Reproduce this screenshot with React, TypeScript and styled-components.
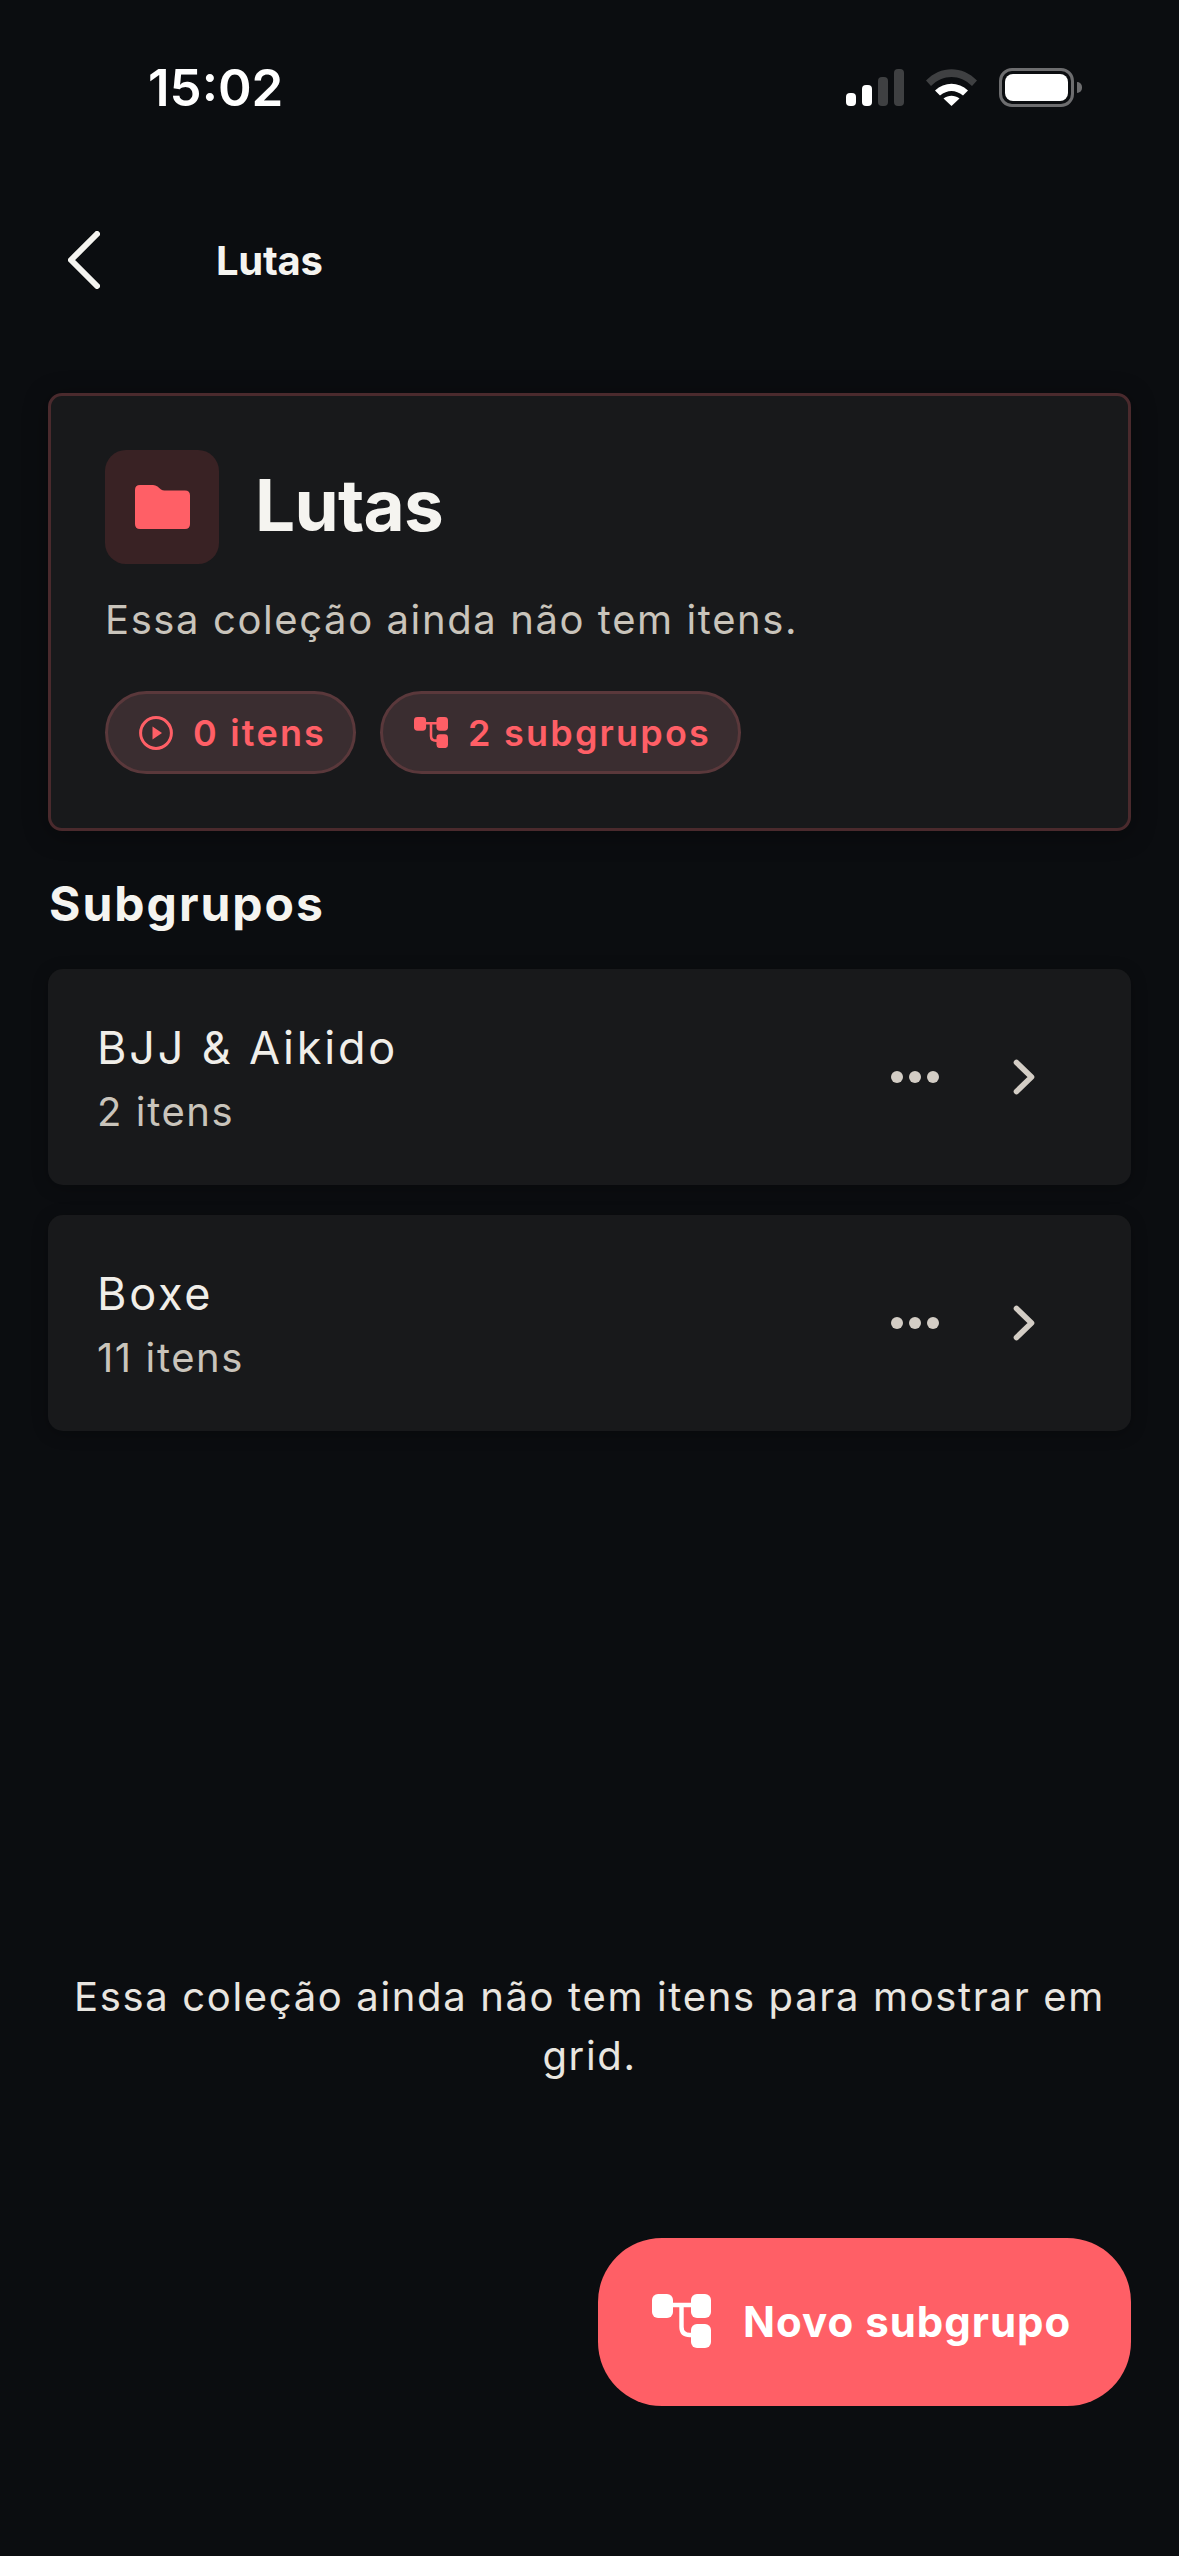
import React from 'react';
import styled, { createGlobalStyle } from 'styled-components';

const coral = '#ff5f66';
const muted = '#d3cdc5';

const GlobalStyle = createGlobalStyle`
  html, body {
    margin: 0;
    padding: 0;
    background: #0b0d10;
  }
  * {
    box-sizing: border-box;
  }
`;

const Page = styled.div`
  position: relative;
  width: 1179px;
  height: 2556px;
  overflow: hidden;
  background: #0b0d10;
  color: #f5f4f0;
  font-family: Inter, 'Liberation Sans', sans-serif;
`;

const StatusBar = styled.div`
  height: 176px;
  padding: 0 105px 2px 148px;
  display: flex;
  align-items: center;
  justify-content: space-between;
`;

const Clock = styled.span`
  font-size: 51px;
  font-weight: 600;
  color: #fff;
`;

const StatusIcons = styled.div`
  display: flex;
  align-items: center;
  gap: 22px;
`;

const Signal = styled.div`
  height: 37px;
  display: flex;
  align-items: flex-end;
  gap: 6px;
`;

const SignalBar = styled.span<{ $height: number; $on?: boolean }>`
  width: 10px;
  height: ${(p) => p.$height}px;
  border-radius: 4px;
  background: ${(p) => (p.$on ? '#fff' : '#3f4042')};
`;

const Battery = styled.div`
  position: relative;
  width: 75px;
  height: 39px;
  padding: 3px;
  border: 3px solid #6d6d6f;
  border-radius: 13px;
  &::after {
    content: '';
    position: absolute;
    right: -11px;
    top: 11px;
    width: 5px;
    height: 11px;
    border-radius: 0 5px 5px 0;
    background: #6d6d6f;
  }
`;

const BatteryFill = styled.div`
  height: 100%;
  border-radius: 8px;
  background: #fff;
`;

const Header = styled.header`
  height: 170px;
  padding: 0 0 2px 68px;
  display: flex;
  align-items: center;
  gap: 116px;
`;

const HeaderTitle = styled.h1`
  margin: 0;
  font-size: 40px;
  font-weight: 700;
  letter-spacing: -0.3px;
`;

const Content = styled.main`
  padding: 47px 48px 0;
`;

const Hero = styled.section`
  padding: 54px;
  height: 438px;
  background: #18191b;
  border: 3px solid #4a2a2d;
  border-radius: 14px;
  box-shadow: 0 4px 24px rgba(0, 0, 0, 0.35);
`;

const HeroTop = styled.div`
  display: flex;
  align-items: center;
  gap: 36px;
`;

const FolderTile = styled.div`
  width: 114px;
  height: 114px;
  display: flex;
  align-items: center;
  justify-content: center;
  border-radius: 21px;
  background: #392224;
`;

const HeroTitle = styled.h2`
  margin: 0 0 5px;
  font-size: 71px;
  font-weight: 700;
  letter-spacing: -0.7px;
`;

const HeroText = styled.p`
  margin: 32px 0 0;
  font-size: 40px;
  line-height: 48px;
  letter-spacing: 1.6px;
  color: #c9c4bb;
`;

const Pills = styled.div`
  margin-top: 47px;
  display: flex;
  gap: 24px;
`;

const Pill = styled.div`
  height: 83px;
  padding: 0 27px 0 31px;
  display: flex;
  align-items: center;
  gap: 20px;
  border: 3px solid #5a383b;
  border-radius: 42px;
  background: #3a2d30;
  color: ${coral};
  font-size: 36px;
  font-weight: 600;
  letter-spacing: 2.2px;
`;

const SectionTitle = styled.h3`
  margin: 46px 0 0;
  padding-left: 1px;
  font-size: 48px;
  line-height: 54px;
  font-weight: 700;
  letter-spacing: 2px;
`;

const RowList = styled.div`
  margin-top: 38px;
  display: flex;
  flex-direction: column;
  gap: 30px;
`;

const Row = styled.div`
  height: 216px;
  padding: 0 96px 0 49px;
  display: flex;
  align-items: center;
  justify-content: space-between;
  border-radius: 15px;
  background: #18191b;
  box-shadow: 0 3px 16px rgba(0, 0, 0, 0.25);
`;

const RowText = styled.div`
  padding-top: 3px;
`;

const RowTitle = styled.div`
  font-size: 45px;
  line-height: 54px;
  letter-spacing: 2.8px;
  color: #f0eee9;
`;

const RowCount = styled.div`
  margin-top: 13px;
  font-size: 40px;
  line-height: 48px;
  letter-spacing: 1.6px;
  color: #c9c4bb;
`;

const RowActions = styled.div`
  display: flex;
  align-items: center;
  gap: 74px;
`;

const Dots = styled.div`
  display: flex;
  gap: 6px;
`;

const Dot = styled.span`
  width: 12px;
  height: 12px;
  border-radius: 50%;
  background: ${muted};
`;

const EmptyNote = styled.p`
  margin: 536px 0 0;
  padding: 0 20px;
  text-align: center;
  font-size: 40px;
  line-height: 59px;
  letter-spacing: 1.65px;
  color: #e9e6e0;
`;

const Fab = styled.button`
  position: absolute;
  right: 48px;
  bottom: 150px;
  width: 533px;
  height: 168px;
  display: flex;
  align-items: center;
  gap: 32px;
  padding: 0 0 2px 54px;
  border: none;
  border-radius: 64px;
  background: ${coral};
  color: #fff;
  font-family: inherit;
  font-size: 42px;
  font-weight: 700;
  letter-spacing: 1px;
`;

// three linked nodes, used on the subgroup pill and on the add button
const TreeIcon = ({ width, color }: { width: number; color: string }) => (
  <svg width={width} viewBox="0 0 59 54" fill="none" style={{ display: 'block' }}>
    <rect x="0" y="0" width="21" height="24" rx="6" fill={color} />
    <rect x="39" y="0" width="20" height="24" rx="6" fill={color} />
    <rect x="39" y="30" width="20" height="24" rx="6" fill={color} />
    <path d="M20 11H40M29.5 11V33Q29.5 41 38 41H40" stroke={color} strokeWidth="4.4" />
  </svg>
);

const PlayCircleIcon = () => (
  <svg width="34" height="34" viewBox="0 0 34 34" fill="none">
    <circle cx="17" cy="17" r="15.4" stroke={coral} strokeWidth="3" />
    <path d="M13.5 10.5L23 17L13.5 23.5Z" fill={coral} />
  </svg>
);

const FolderIcon = () => (
  <svg width="55" height="44" viewBox="0 0 55 44" fill={coral}>
    <path d="M5 0H18Q20.5 0 22.5 1.6L26 4.4Q27.5 5.5 29.5 5.5H50Q55 5.5 55 10.5V39Q55 44 50 44H5Q0 44 0 39V5Q0 0 5 0Z" />
  </svg>
);

const BackIcon = () => (
  <svg width="32" height="58" viewBox="0 0 32 58" fill="none" style={{ display: 'block' }}>
    <path d="M29 3L3 29L29 55" stroke="#f5f4f0" strokeWidth="6" strokeLinecap="round" strokeLinejoin="round" />
  </svg>
);

const ChevronIcon = () => (
  <svg width="22" height="36" viewBox="0 0 22 36" fill="none" style={{ display: 'block' }}>
    <path d="M3.5 3.5L18.5 18L3.5 32.5" stroke={muted} strokeWidth="5.6" strokeLinecap="round" strokeLinejoin="round" />
  </svg>
);

const WifiIcon = () => (
  <svg width="51" height="37" viewBox="0 0 51 37" fill="none" style={{ display: 'block' }}>
    <path d="M0 11.5C14.5 -3.6 36.5 -3.6 51 11.5L46 17C34 5 17 5 5 17Z" fill="#3f4042" />
    <path d="M9 21.5C18.5 12.5 32.5 12.5 42 21.5L37 26.5C29.5 20.5 21.5 20.5 14 26.5Z" fill="#fff" />
    <path d="M17.5 29.5C22.5 25.7 28.5 25.7 33.5 29.5L25.5 37Z" fill="#fff" />
  </svg>
);

const subgroups = [
  { name: 'BJJ & Aikido', count: '2 itens' },
  { name: 'Boxe', count: '11 itens' },
];

const App = () => {
  return (
    <Page>
      <GlobalStyle />
      <StatusBar>
        <Clock>15:02</Clock>
        <StatusIcons>
          <Signal>
            <SignalBar $height={13} $on />
            <SignalBar $height={21} $on />
            <SignalBar $height={29} />
            <SignalBar $height={37} />
          </Signal>
          <WifiIcon />
          <Battery>
            <BatteryFill />
          </Battery>
        </StatusIcons>
      </StatusBar>

      <Header>
        <BackIcon />
        <HeaderTitle>Lutas</HeaderTitle>
      </Header>

      <Content>
        <Hero>
          <HeroTop>
            <FolderTile>
              <FolderIcon />
            </FolderTile>
            <HeroTitle>Lutas</HeroTitle>
          </HeroTop>
          <HeroText>Essa coleção ainda não tem itens.</HeroText>
          <Pills>
            <Pill>
              <PlayCircleIcon />
              0 itens
            </Pill>
            <Pill>
              <TreeIcon width={34} color={coral} />
              2 subgrupos
            </Pill>
          </Pills>
        </Hero>

        <SectionTitle>Subgrupos</SectionTitle>
        <RowList>
          {subgroups.map((group) => (
            <Row key={group.name}>
              <RowText>
                <RowTitle>{group.name}</RowTitle>
                <RowCount>{group.count}</RowCount>
              </RowText>
              <RowActions>
                <Dots>
                  <Dot />
                  <Dot />
                  <Dot />
                </Dots>
                <ChevronIcon />
              </RowActions>
            </Row>
          ))}
        </RowList>

        <EmptyNote>Essa coleção ainda não tem itens para mostrar em grid.</EmptyNote>
      </Content>

      <Fab>
        <TreeIcon width={59} color="#fff" />
        Novo subgrupo
      </Fab>
    </Page>
  );
};

export default App;
